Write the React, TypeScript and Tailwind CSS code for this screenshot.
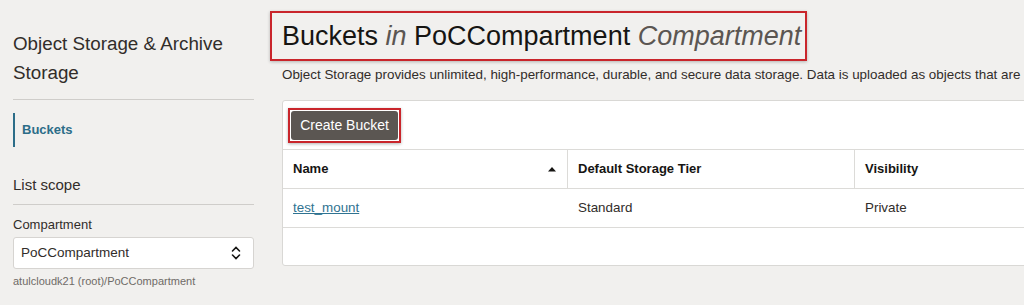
import React from 'react';

function SortUp() {
  return (
    <svg width="10" height="6" viewBox="0 0 10 6" className="mr-[10px]">
      <path d="M1 5.5 L5 1 L9 5.5 Z" fill="#161513" />
    </svg>
  );
}

function UpDown() {
  return (
    <svg width="12" height="16" viewBox="0 0 12 16">
      <path d="M2.5 6 L6 2.5 L9.5 6" fill="none" stroke="#161513" strokeWidth="1.6" strokeLinecap="round" />
      <path d="M2.5 10 L6 13.5 L9.5 10" fill="none" stroke="#161513" strokeWidth="1.6" strokeLinecap="round" />
    </svg>
  );
}

export default function App() {
  return (
    <div
      className="flex h-[305px] w-[1024px] overflow-hidden bg-[#f1f0ee] text-[#312d2a]"
      style={{ fontFamily: '"Liberation Sans", Arial, sans-serif' }}
    >
      {/* sidebar */}
      <aside className="ml-[13px] w-[241px] shrink-0 pt-[29px]">
        <h2 className="text-[18.8px] leading-[29px] text-[#312d2a]">Object Storage &amp; Archive Storage</h2>
        <div className="mt-[12px] border-t border-[#cfcdca]" />
        <div className="mt-[13px] flex h-[34px] items-center border-l-2 border-[#2c6d88] pl-[7px]">
          <span className="text-[13px] font-bold text-[#2c6d88]">Buckets</span>
        </div>
        <div className="mt-[29px] text-[15px] leading-[18px]">List scope</div>
        <div className="mt-[10px] border-t border-[#cfcdca]" />
        <div className="mt-[12px] text-[13px] leading-[16px]">Compartment</div>
        <div className="mt-[4px] flex h-[32px] items-center justify-between rounded-[3px] border border-[#d6d4d1] bg-white pl-[7px] pr-[11px]">
          <span className="text-[13.5px]">PoCCompartment</span>
          <UpDown />
        </div>
        <div className="mt-[6px] text-[11px] leading-[13px] text-[#6f6b67]">atulcloudk21 (root)/PoCCompartment</div>
      </aside>

      {/* main */}
      <main className="ml-[28px] min-w-0 flex-1 pt-[11px]">
        <div className="-ml-[12px] inline-flex h-[50px] items-center border-2 border-[#c9252b] pl-[10px] pr-[4px] shadow-[0_1px_3px_rgba(0,0,0,0.25)]">
          <h1 className="whitespace-nowrap text-[27px] leading-[30px] text-[#161513]">
            Buckets <i className="text-[#5b5652]">in</i> PoCCompartment{' '}
            <i className="text-[#5b5652]">Compartment</i>
          </h1>
        </div>
        <p className="mt-[6px] whitespace-nowrap text-[13.4px] leading-[16px] text-[#312d2a]">
          Object Storage provides unlimited, high-performance, durable, and secure data storage. Data is
          uploaded as objects that are
        </p>

        <div className="mt-[17px] w-[780px] rounded-[3px] border border-[#d9d8d5] bg-white">
          <div className="flex h-[48px] items-center pl-[5px]">
            <div className="border-2 border-[#c9252b] p-px shadow-[0_1px_3px_rgba(0,0,0,0.3)]">
              <button className="flex h-[29px] w-[107px] items-center justify-center rounded-[3px] bg-[#5b5652] text-[14px] text-white">
                Create Bucket
              </button>
            </div>
          </div>
          <div className="grid grid-cols-[285px_287px_1fr] border-t border-[#dcdbd8]">
            <div className="flex h-[38px] items-center justify-between border-r border-[#dcdbd8] pl-[10px] text-[13px] font-bold text-[#161513]">
              Name
              <SortUp />
            </div>
            <div className="flex h-[38px] items-center border-r border-[#dcdbd8] pl-[10px] text-[13px] font-bold text-[#161513]">
              Default Storage Tier
            </div>
            <div className="flex h-[38px] items-center pl-[10px] text-[13px] font-bold text-[#161513]">
              Visibility
            </div>
          </div>
          <div className="grid grid-cols-[285px_287px_1fr] border-t border-[#dcdbd8] text-[13.4px]">
            <div className="flex h-[38px] items-center pl-[10px]">
              <a className="text-[#2f7391] underline">test_mount</a>
            </div>
            <div className="flex h-[38px] items-center pl-[10px] text-[#312d2a]">Standard</div>
            <div className="flex h-[38px] items-center pl-[10px] text-[#312d2a]">Private</div>
          </div>
          <div className="h-[38px] border-t border-[#dcdbd8]" />
        </div>
      </main>
    </div>
  );
}
